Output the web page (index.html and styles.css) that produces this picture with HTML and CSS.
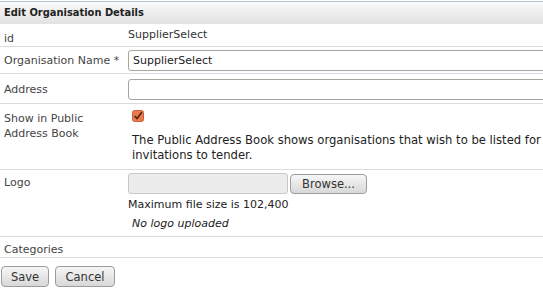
FILE: index.html
```
<!DOCTYPE html>
<html lang="en">

<head>
    <meta charset="UTF-8">
    <meta name="viewport" content="width=device-width, initial-scale=1.0">
    <title>Edit Organisation Details</title>
    <link rel="stylesheet" href="styles.css">
</head>

<body>
    <div class="panel">
        <div class="panel__head">Edit Organisation Details</div>

        <div class="row row--id">
            <div class="row__label">id</div>
            <div class="row__value">SupplierSelect</div>
        </div>

        <div class="row row--name">
            <label class="row__label" for="orgName">Organisation Name *</label>
            <div class="row__value"><input class="text" id="orgName" type="text" value="SupplierSelect"></div>
        </div>

        <div class="row row--address">
            <label class="row__label" for="address">Address</label>
            <div class="row__value"><input class="text" id="address" type="text"></div>
        </div>

        <div class="row row--public">
            <div class="row__label">Show in Public<br>Address Book</div>
            <div class="row__value row__value--inset">
                <span class="check">
                    <svg width="12" height="12" viewBox="0 0 12 12">
                        <rect x="0.5" y="0.5" width="11" height="11" rx="2" fill="#ec7a4e" stroke="#c9603a"/>
                        <path d="M2.6 6 L5 8.6 L9.8 2.2" fill="none" stroke="#4a2414" stroke-width="1.6"/>
                    </svg>
                </span>
                <p class="hint">The Public Address Book shows organisations that wish to be listed for invitations to tender.</p>
            </div>
        </div>

        <div class="row row--logo">
            <div class="row__label">Logo</div>
            <div class="row__value">
                <div class="upload">
                    <span class="upload__field"></span>
                    <button class="btn btn--browse" type="button">Browse...</button>
                </div>
                <div class="upload__note">Maximum file size is 102,400</div>
                <div class="upload__empty">No logo uploaded</div>
            </div>
        </div>

        <div class="row row--cats">
            <div class="row__label">Categories</div>
        </div>

        <div class="actions">
            <button class="btn" type="button">Save</button>
            <button class="btn" type="button">Cancel</button>
        </div>
    </div>
</body>

</html>
```
FILE: styles.css
```
body {
    margin: 0;
    overflow: hidden;
    font-family: "DejaVu Sans", Verdana, sans-serif;
    font-size: 11px;
    color: #333;
    background: #fff;
}

.panel {
    width: 620px;
    margin-top: 1px;
}

.panel__head {
    height: 22px;
    line-height: 22px;
    padding-left: 4px;
    border-top: 1px solid #b6c2d2;
    background: linear-gradient(#f9f9f9, #e2e2e2);
    font-family: "DejaVu Sans Condensed", "DejaVu Sans", sans-serif;
    font-weight: bold;
    color: #222;
}

.row {
    display: flex;
    border-bottom: 1px solid #dcdcdc;
    line-height: 15px;
}

.row__label {
    width: 124px;
    flex-shrink: 0;
    padding-left: 4px;
    color: #444;
}

.row__value {
    flex: 1;
}

.row__value--inset {
    padding-left: 4px;
}

.row--id {
    height: 22px;
    align-items: center;
}

.row--id .row__label {
    padding-top: 6px;
}

.row--id .row__value {
    padding-bottom: 2px;
}

.row--name {
    height: 26px;
    align-items: center;
}

.row--address {
    height: 29px;
    align-items: center;
}

.row--address .row__label {
    padding-top: 1px;
}

.text {
    display: block;
    box-sizing: border-box;
    width: 450px;
    height: 21px;
    margin: 0;
    padding: 0 4px;
    border: 1px solid #aaa49c;
    border-radius: 3px;
    font: inherit;
    color: #222;
}

.row--address .text {
    margin-top: 2px;
}

.row--public {
    height: 66px;
    padding-top: 7px;
    box-sizing: border-box;
}

.check {
    display: block;
    height: 12px;
    margin-top: -1px;
}

.hint {
    max-width: 412px;
    margin: 11px 0 0;
    color: #222;
    font-size: 11.6px;
}

.row--logo {
    height: 67px;
    padding-top: 3px;
    box-sizing: border-box;
}

.row--logo .row__label {
    padding-top: 2px;
}

.upload {
    display: flex;
    gap: 2px;
}

.upload__field {
    width: 158px;
    height: 19px;
    border: 1px solid #c8c8c8;
    border-radius: 3px;
    background: #ececec;
}

.upload__note {
    margin-top: 3px;
    color: #222;
}

.upload__empty {
    margin-top: 4px;
    padding-left: 4px;
    font-style: italic;
    color: #222;
}

.row--cats {
    height: 21px;
    padding-top: 5px;
    box-sizing: border-box;
}

.btn {
    height: 21px;
    padding: 0 8px;
    border: 1px solid #9c9c9c;
    border-radius: 4px;
    background: linear-gradient(#f6f6f6, #d8d8d8);
    font: inherit;
    font-size: 11.5px;
    color: #333;
}

.btn--browse {
    width: 77px;
    height: 20px;
    margin-top: 1px;
}

.actions {
    display: flex;
    gap: 6px;
    padding: 8px 0 0 1px;
}

.actions .btn:first-child {
    width: 48px;
}

.actions .btn:last-child {
    width: 60px;
}
```
